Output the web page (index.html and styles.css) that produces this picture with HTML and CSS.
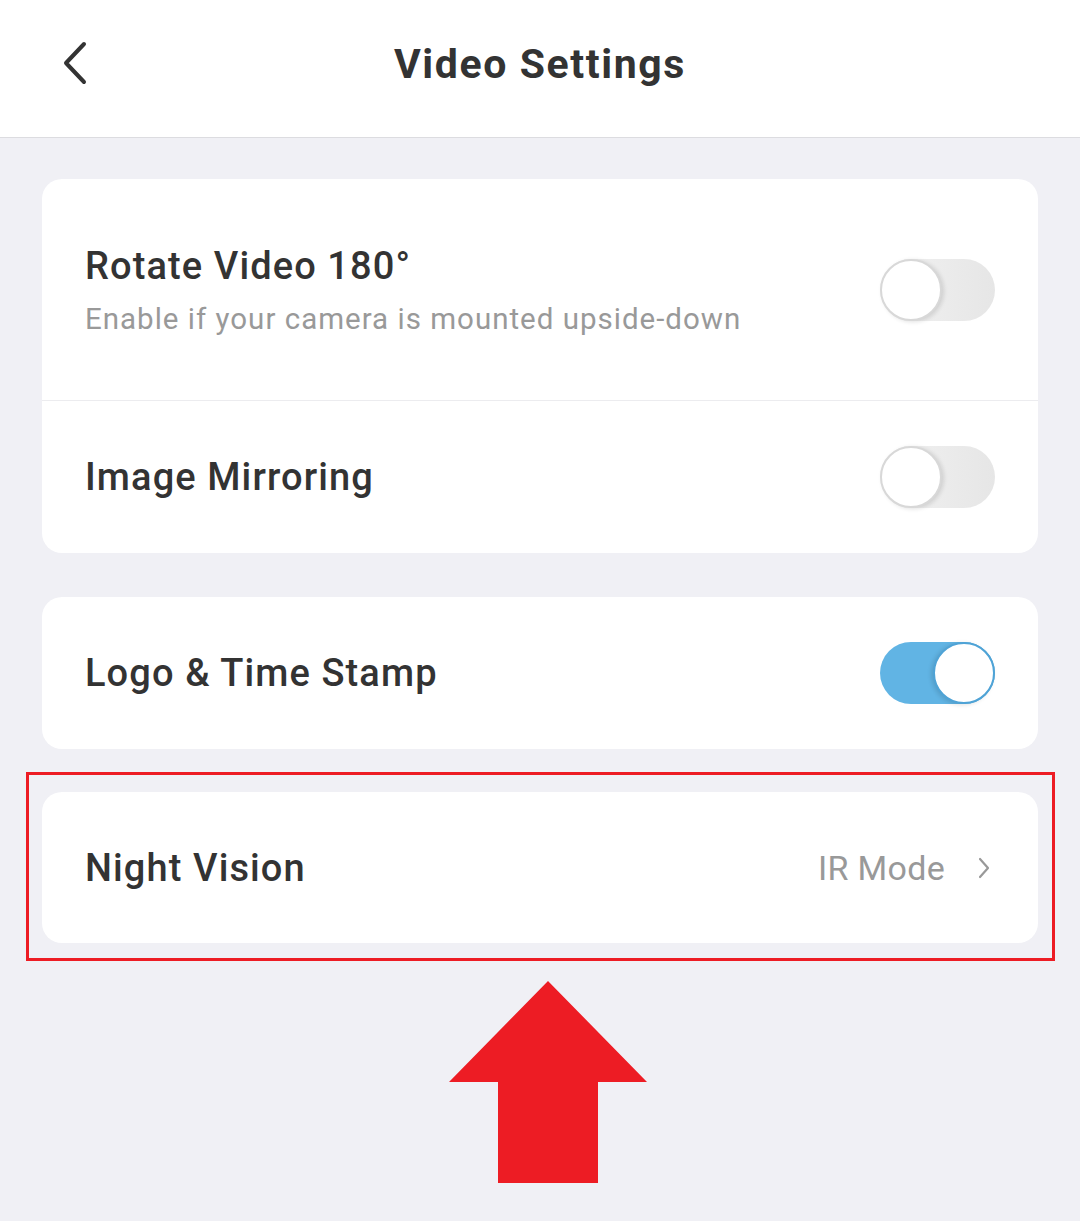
FILE: index.html
```html
<!DOCTYPE html>
<html lang="en">
  <head>
    <meta charset="UTF-8" />
    <meta name="viewport" content="width=device-width, initial-scale=1.0" />
    <title>Video Settings</title>
    <link rel="stylesheet" href="styles.css">
  </head>
  <body>
    <header class="topbar">
      <button class="back" aria-label="Back">
        <svg width="30" height="46" viewBox="0 0 30 46">
          <path d="M24 4 L6 23 L24 42" fill="none" stroke="#333" stroke-width="4" stroke-linecap="round" stroke-linejoin="round" />
        </svg>
      </button>
      <h1>Video Settings</h1>
    </header>

    <main class="content">
      <div class="card">
        <div class="row row-tall">
          <div class="row-text">
            <div class="row-title">Rotate Video 180°</div>
            <div class="row-sub">Enable if your camera is mounted upside-down</div>
          </div>
          <span class="toggle"><span class="knob"></span></span>
        </div>
        <div class="row">
          <div class="row-title">Image Mirroring</div>
          <span class="toggle"><span class="knob"></span></span>
        </div>
      </div>

      <div class="card">
        <div class="row">
          <div class="row-title">Logo &amp; Time Stamp</div>
          <span class="toggle on"><span class="knob"></span></span>
        </div>
      </div>

      <div class="highlight">
        <div class="card">
          <div class="row">
            <div class="row-title">Night Vision</div>
            <div class="row-value">
              IR Mode
              <svg width="14" height="22" viewBox="0 0 14 22">
                <path d="M3 2 L11 11 L3 20" fill="none" stroke="#999" stroke-width="2.2" stroke-linecap="round" stroke-linejoin="round" />
              </svg>
            </div>
          </div>
        </div>
      </div>

      <div class="arrow">
        <svg width="200" height="204" viewBox="0 0 200 204">
          <polygon points="99,0 198,101 149,101 149,202 49,202 49,101 0,101" fill="#ed1c24" />
        </svg>
      </div>
    </main>
  </body>
</html>
```

FILE: styles.css
```css
/* Base */
body {
  margin: 0;
  padding: 0;
  font-family: Roboto, "Noto Sans", "Liberation Sans", sans-serif;
  background-color: #f0f0f5;
  color: #333;
}

/* Header */
.topbar {
  position: relative;
  height: 137px;
  background-color: #fff;
  border-bottom: 1px solid #dcdce0;
  display: flex;
  align-items: center;
  justify-content: center;
}

.topbar h1 {
  margin: 0;
  font-size: 41px;
  font-weight: 700;
  letter-spacing: 1.6px;
  color: #333;
  padding-bottom: 10px;
}

.back {
  position: absolute;
  left: 60px;
  top: 40px;
  background: none;
  border: none;
  padding: 0;
}

/* Content */
.content {
  padding: 41px 42px 0;
  display: flex;
  flex-direction: column;
  gap: 44px;
}

.card {
  background-color: #fff;
  border-radius: 20px;
  overflow: hidden;
}

.row {
  height: 152px;
  padding: 0 43px;
  display: flex;
  align-items: center;
  justify-content: space-between;
}

.row + .row {
  border-top: 1px solid #ececef;
}

.row-tall {
  height: 221px;
}

.row-title {
  font-size: 38px;
  font-weight: 500;
  letter-spacing: 1.1px;
  color: #333;
}

.row-sub {
  font-size: 29.5px;
  letter-spacing: 1px;
  color: #999;
  margin-top: 14px;
}

.row-value {
  display: flex;
  align-items: center;
  gap: 32px;
  font-size: 34px;
  letter-spacing: 0.3px;
  color: #999;
  margin-right: 4px;
}

/* Toggle */
.toggle {
  position: relative;
  width: 115px;
  height: 62px;
  border-radius: 31px;
  background: linear-gradient(90deg, #f2f2f2, #e6e6e6);
  flex-shrink: 0;
}

.knob {
  position: absolute;
  left: 0;
  top: 0;
  width: 58px;
  height: 58px;
  border-radius: 50%;
  background-color: #fff;
  border: 2px solid #d8d8d8;
  box-shadow: 2px 1px 4px rgba(0, 0, 0, 0.12);
}

.toggle.on {
  background: #61b4e4;
}

.toggle.on .knob {
  left: auto;
  right: 0;
  border-color: #4fa3d6;
  box-shadow: -2px 1px 4px rgba(0, 0, 0, 0.12);
}

/* Highlight box */
.highlight {
  margin: -21px -17px 0 -16px;
  padding: 17px 14px 15px 13px;
  border: 3px solid #ed1c24;
}

.highlight .row {
  height: 151px;
}

.arrow {
  display: flex;
  justify-content: center;
  margin-top: -24px;
  padding-left: 18px;
}
```
